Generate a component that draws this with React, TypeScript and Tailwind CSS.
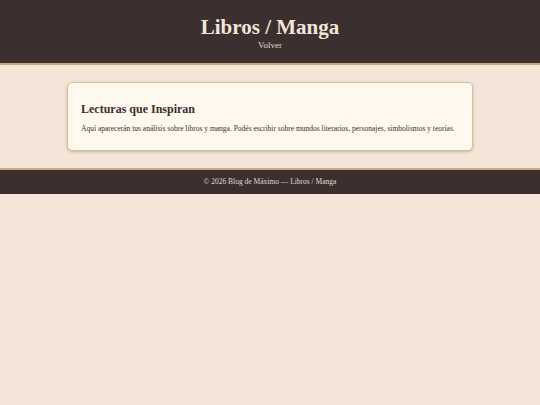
export default function App() {
  return (
    <div className="min-h-screen bg-[#f3e6d8] font-['Liberation_Serif',serif] text-[#3b2f2f]">
      <header className="h-[65px] bg-[#3b2f2f] border-b-2 border-[#c9a77c] flex flex-col items-center pt-[14px] text-[#f3e6d8]">
        <h1 className="text-[21px] font-bold leading-[26px]">Libros / Manga</h1>
        <a className="text-[9px] leading-[10px] text-[#e6d8c8]">Volver</a>
      </header>

      <main className="px-[67px] pt-[17px] pb-[17px]">
        <section className="bg-[#fff8ee] border border-[#d9bf94] rounded-[5px] shadow-[0_1px_3px_rgba(120,90,50,0.35)] px-[13px] pt-[19px] pb-[16px]">
          <h2 className="text-[12px] font-bold leading-[15px] mb-[7px]">Lecturas que Inspiran</h2>
          <p className="text-[7.5px] leading-[10px]">
            Aquí aparecerán tus análisis sobre libros y manga. Podés escribir sobre mundos literarios, personajes, simbolismos y teorías.
          </p>
        </section>
      </main>

      <footer className="h-[26px] bg-[#3b2f2f] border-t-2 border-[#c9a77c] flex items-center justify-center text-[7.5px] text-[#e6d8c8]">
        © 2026 Blog de Máximo — Libros / Manga
      </footer>
    </div>
  );
}
